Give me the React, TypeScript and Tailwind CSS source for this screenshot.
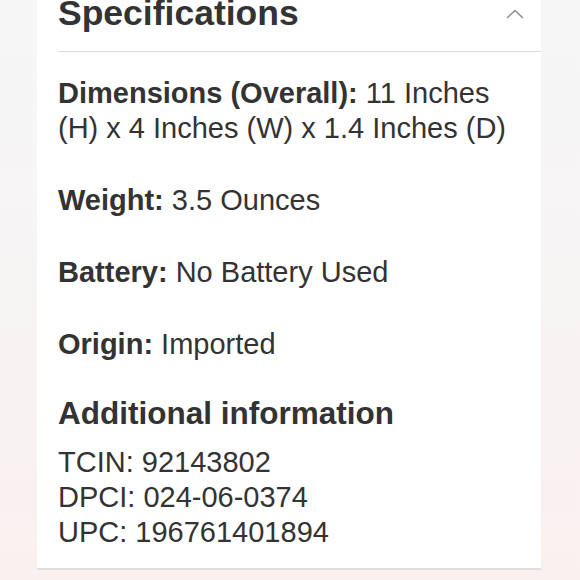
import React from 'react';

const specs = [
  { label: 'Dimensions (Overall):', value: '11 Inches (H) x 4 Inches (W) x 1.4 Inches (D)' },
  { label: 'Weight:', value: '3.5 Ounces' },
  { label: 'Battery:', value: 'No Battery Used' },
  { label: 'Origin:', value: 'Imported' },
];

const extraInfo = ['TCIN: 92143802', 'DPCI: 024-06-0374', 'UPC: 196761401894'];

const App = () => {
  return (
    <div
      className="h-[580px] w-[580px] overflow-hidden bg-gradient-to-b from-[#f6f6f6] via-[#f7f4f4] to-[#faf0f0] text-[#333333]"
      style={{ fontFamily: '"Liberation Sans", Arial, Helvetica, sans-serif' }}
    >
      <div className="-mt-[8px] ml-[37px] w-[504px] border-b-2 border-[#dedede] bg-white pb-[18px] pl-[21px]">
        {/* Header */}
        <div className="flex items-center justify-between border-b border-[#dcdcdc] pb-[17px] pr-[17px]">
          <h2 className="text-[35.5px] font-bold leading-[42px]">Specifications</h2>
          <svg width="18" height="10" viewBox="0 0 18 10" fill="none" className="mt-[1px]">
            <polyline points="1,9 9,1.5 17,9" stroke="#8a8a8a" strokeWidth="1.4" />
          </svg>
        </div>

        {/* Specs list */}
        <div className="flex flex-col gap-[37px] pr-[20px] pt-[24px]">
          {specs.map((s) => (
            <p key={s.label} className="text-[29px] leading-[35px]">
              <span className="font-bold">{s.label}</span> {s.value}
            </p>
          ))}
        </div>

        <h3 className="mt-[33px] text-[31.5px] font-bold leading-[37px]">Additional information</h3>
        <div className="mt-[13px] flex flex-col">
          {extraInfo.map((line) => (
            <p key={line} className="text-[29px] leading-[35px]">
              {line}
            </p>
          ))}
        </div>
      </div>
    </div>
  );
};

export default App;
